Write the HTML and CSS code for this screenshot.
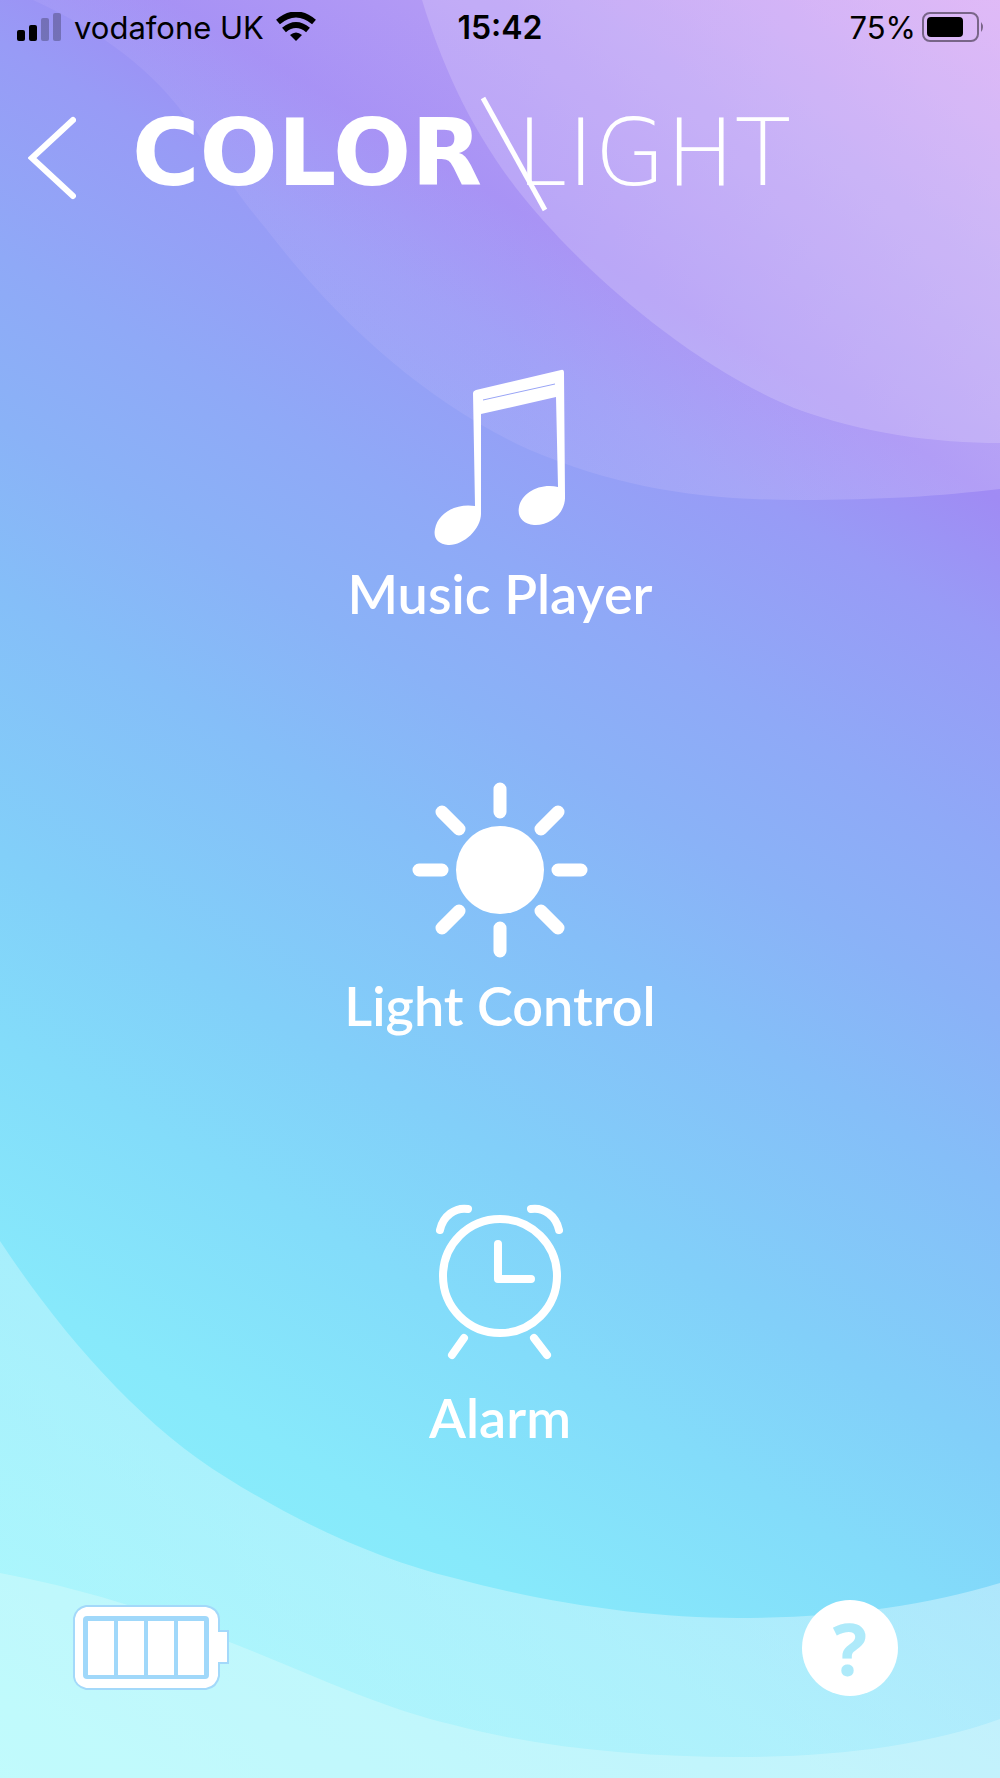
FILE: index.html
```
<!DOCTYPE html>
<html lang="en">
<head>
  <meta charset="UTF-8">
  <meta name="viewport" content="width=device-width, initial-scale=1.0">
  <title>Color Light</title>
  <link rel="stylesheet" href="styles.css">
</head>
<body>
  <!-- Background waves -->
  <svg class="waves" viewBox="0 0 1000 1778" preserveAspectRatio="none" aria-hidden="true">
    <defs>
      <linearGradient id="fade-top">
        <stop offset="0" stop-color="#f4dcff" stop-opacity="0.08"/>
        <stop offset="0.5" stop-color="#f4dcff" stop-opacity="0.1"/>
        <stop offset="1" stop-color="#f4e6ff" stop-opacity="0.22"/>
      </linearGradient>
      <linearGradient id="fade-bottom">
        <stop offset="0" stop-color="#f4ffff" stop-opacity="0.3"/>
        <stop offset="1" stop-color="#f0fcff" stop-opacity="0.4"/>
      </linearGradient>
    </defs>
    <path fill="url(#fade-top)" d="M33 0 C90 26 145 62 183 113 C215 155 225 180 267 230 C340 325 430 405 530 450 C620 488 700 500 800 500 C880 500 940 496 1000 489 V0 Z"/>
    <path class="wave-top-inner" d="M422 0 C442 65 470 128 516 188 C580 270 690 365 794 408 C865 434 935 443 1000 443 V0 Z"/>
    <path fill="url(#fade-bottom)" d="M0 1241 C60 1332 140 1425 227 1478 C300 1524 380 1560 454 1578 C550 1604 650 1618 737 1618 C835 1618 920 1607 1000 1583 V1778 H0 Z"/>
    <path class="wave-bottom-inner" d="M0 1573 C80 1588 150 1610 227 1641 C305 1671 380 1708 454 1725 C540 1748 640 1757 737 1757 C835 1757 925 1746 1000 1719 V1778 H0 Z"/>
  </svg>

  <div class="app">
    <div class="status-bar">
      <div class="status-left">
        <svg class="signal" width="46" height="30" viewBox="0 0 46 30" aria-hidden="true">
          <rect x="1" y="18" width="8" height="11" rx="2"/>
          <rect x="13" y="13" width="8" height="16" rx="2"/>
          <rect x="25" y="6" width="8" height="23" rx="2" opacity="0.25"/>
          <rect x="37" y="1" width="8" height="28" rx="2" opacity="0.25"/>
        </svg>
        <span>vodafone UK</span>
        <svg class="wifi" width="40" height="30" viewBox="0 0 40 30" aria-hidden="true">
          <path d="M2 10 Q20 -5 38 10" fill="none" stroke="#000" stroke-width="6"/>
          <path d="M8 18 Q20 8 32 18" fill="none" stroke="#000" stroke-width="6"/>
          <path d="M14 23 Q20 18 26 23 L20 29 Z"/>
        </svg>
      </div>
      <div class="time">15:42</div>
      <div class="status-right">
        <span>75%</span>
        <svg width="62" height="30" viewBox="0 0 62 30" aria-hidden="true">
          <rect x="1" y="1" width="55" height="28" rx="7" fill="none" stroke="#000" stroke-width="2" opacity="0.45"/>
          <rect x="5" y="5" width="36" height="20" rx="4"/>
          <path d="M59 10 Q63 15 59 20 Z" opacity="0.45"/>
        </svg>
      </div>
    </div>

    <header class="header">
      <button class="back" type="button" aria-label="Back">
        <svg width="48" height="84" viewBox="0 0 48 84" aria-hidden="true">
          <path d="M45 4 L4 42 L45 80" fill="none" stroke="#fff" stroke-width="6" stroke-linecap="round"/>
        </svg>
      </button>
      <h1 class="logo">
        <span class="logo-color">COLOR</span><span class="logo-light">LIGHT</span>
        <svg class="logo-slash" width="68" height="116" viewBox="0 0 68 116" aria-hidden="true">
          <path d="M3 2 L65 114" stroke="#fff" stroke-width="5"/>
        </svg>
      </h1>
    </header>

    <nav class="menu">
      <button class="menu-item" type="button">
        <svg width="180" height="180" viewBox="-10 0 180 180" aria-hidden="true">
          <path d="M56 22 L141 2 Q144 1 144 5 L145 128 C146 145 130 158 114 157 C103 156 97 149 99 139 C102 125 119 115 138 119 L136 29 L61 46 L61 144 C62 161 43 178 28 177 C18 176 13 170 15 161 C18 145 36 135 55 138 L53 25 Q53 23 56 22 Z" fill="#fff"/>
          <path d="M63 32 L135 16" stroke="#99a5f6"/>
        </svg>
        <span>Music Player</span>
      </button>
      <button class="menu-item" type="button">
        <svg width="180" height="180" viewBox="0 0 180 180" aria-hidden="true">
          <circle cx="90" cy="90" r="44" fill="#fff"/>
          <g stroke="#fff" stroke-width="13" stroke-linecap="round">
            <path d="M90 9 V32 M90 148 V171 M9 90 H32 M148 90 H171"/>
            <path d="M32 32 L49 49 M148 32 L131 49 M32 148 L49 131 M148 148 L131 131"/>
          </g>
        </svg>
        <span>Light Control</span>
      </button>
      <button class="menu-item" type="button">
        <svg width="180" height="180" viewBox="0 0 180 180" aria-hidden="true">
          <g fill="none" stroke="#fff" stroke-width="8" stroke-linecap="round" stroke-linejoin="round">
            <circle cx="90" cy="84" r="57"/>
            <path d="M88 52 V87 H121"/>
            <path d="M30 38 C33 24 45 15 58 17 M149 38 C146 24 134 15 121 17"/>
            <path d="M54 146 L42 163 M124 146 L137 163"/>
          </g>
        </svg>
        <span>Alarm</span>
      </button>
    </nav>

    <footer class="footer">
      <svg width="160" height="88" viewBox="0 0 160 88" role="img" aria-label="Battery full">
        <path d="M14 2 H134 Q146 4 147 15 V27 H156 V59 H147 V72 Q145 83 134 85 H14 Q3 82 2 73 V14 Q4 4 14 2 Z" fill="#fff" stroke="#a3d9fa" stroke-width="2"/>
        <rect x="11" y="12" width="126" height="63" rx="4" fill="#a0d8fa"/>
        <path d="M16 17 H42 V71 H16 Z M46 17 H72 V71 H46 Z M76 17 H102 V71 H76 Z M106 17 H132 V71 H106 Z" fill="#fff"/>
      </svg>
      <button class="help" type="button" aria-label="Help">?</button>
    </footer>
  </div>
</body>
</html>
```
FILE: styles.css
```
* {
  box-sizing: border-box;
}
body {
  margin: 0;
  position: relative;
  min-height: 100vh;
  color: #fff;
  font-family: Lato, sans-serif;
  background: linear-gradient(211deg, #d29df2 0%, #b297f4 11%, #a08bf4 21%, #989bf6 27%, #8fa9f7 36%, #8ab2f7 43%, #85bef8 50%, #82cff9 61%, #83dcfa 69%, #87e9fb 79%, #8ef8fc 100%);
}
button {
  padding: 0;
  border: 0;
  background: none;
  color: inherit;
  font: inherit;
  cursor: pointer;
}
svg {
  display: block;
}
.waves {
  position: absolute;
  top: 0;
  left: 0;
  width: 100%;
  height: 100%;
}
.wave-top-inner {
  fill: rgba(250, 240, 255, 0.2);
}
.wave-bottom-inner {
  fill: rgba(244, 255, 250, 0.28);
}
.app {
  position: relative;
  display: flex;
  flex-direction: column;
  min-height: 100vh;
}

/* Status bar */
.status-bar {
  display: grid;
  grid-template-columns: 1fr auto 1fr;
  align-items: center;
  height: 54px;
  padding: 0 16px;
  color: #000;
  font-family: Inter, sans-serif;
  font-size: 31px;
}
.status-left, .status-right {
  display: flex;
  align-items: center;
}
.status-left {
  gap: 12px;
}
.status-right {
  justify-content: flex-end;
  gap: 6px;
}
.time {
  font-size: 32px;
  font-weight: 600;
}

/* Header */
.header {
  display: flex;
  align-items: center;
  padding: 42px 28px 0;
}
.back {
  padding-top: 8px;
}
.logo {
  position: relative;
  display: flex;
  margin: 0 0 0 56px;
  font-family: "DejaVu Sans", sans-serif;
  font-size: 92px;
  line-height: 116px;
}
.logo-color {
  width: 384px;
  font-weight: 700;
}
.logo-light {
  font-weight: 200;
}
.logo-slash {
  position: absolute;
  left: 348px;
  top: 0;
}

/* Menu */
.menu {
  display: flex;
  flex-direction: column;
  align-items: center;
  gap: 150px;
  margin-top: 156px;
}
.menu-item {
  display: flex;
  flex-direction: column;
  align-items: center;
  gap: 10px;
  font-size: 54px;
  font-weight: 600;
  line-height: 72px;
}

/* Footer */
.footer {
  display: flex;
  justify-content: space-between;
  align-items: center;
  margin-top: auto;
  padding: 0 102px 82px 72px;
}
.help {
  width: 96px;
  height: 96px;
  border-radius: 50%;
  background: #fff;
  color: #aeeafa;
  font-family: "Open Sans", sans-serif;
  font-size: 72px;
  font-weight: 700;
  line-height: 96px;
}
```
